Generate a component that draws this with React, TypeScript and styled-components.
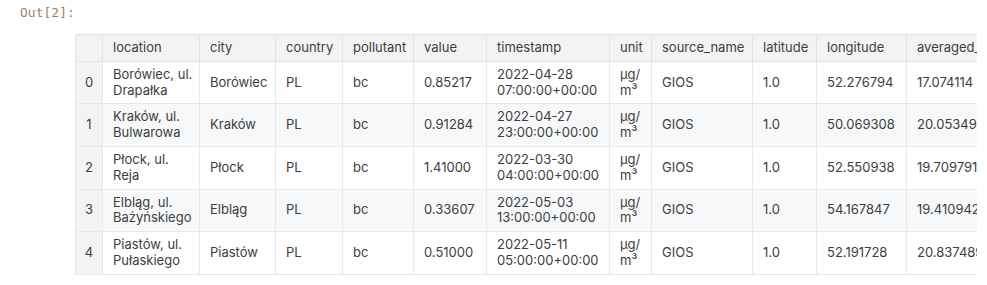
import React from 'react';
import styled, { createGlobalStyle } from 'styled-components';

const GlobalStyle = createGlobalStyle`
  html, body {
    margin: 0;
    padding: 0;
    background: #ffffff;
  }
`;

type Row = {
  location: [string, string];
  city: string;
  value: string;
  timestamp: [string, string];
  lat: string;
  lon: string;
  avg: string;
};

const rows: Row[] = [
  { location: ['Borówiec, ul.', 'Drapałka'], city: 'Borówiec', value: '0.85217', timestamp: ['2022-04-28', '07:00:00+00:00'], lat: '52.276794', lon: '17.074114', avg: '1' },
  { location: ['Kraków, ul.', 'Bulwarowa'], city: 'Kraków', value: '0.91284', timestamp: ['2022-04-27', '23:00:00+00:00'], lat: '50.069308', lon: '20.053492', avg: '1' },
  { location: ['Płock, ul.', 'Reja'], city: 'Płock', value: '1.41000', timestamp: ['2022-03-30', '04:00:00+00:00'], lat: '52.550938', lon: '19.709791', avg: '1' },
  { location: ['Elbląg, ul.', 'Bażyńskiego'], city: 'Elbląg', value: '0.33607', timestamp: ['2022-05-03', '13:00:00+00:00'], lat: '54.167847', lon: '19.410942', avg: '1' },
  { location: ['Piastów, ul.', 'Pułaskiego'], city: 'Piastów', value: '0.51000', timestamp: ['2022-05-11', '05:00:00+00:00'], lat: '52.191728', lon: '20.837489', avg: '1' },
];

// column widths measured from the border lines
const columns = [
  { name: '', width: 27 },
  { name: 'location', width: 97 },
  { name: 'city', width: 76 },
  { name: 'country', width: 67 },
  { name: 'pollutant', width: 71 },
  { name: 'value', width: 73 },
  { name: 'timestamp', width: 123 },
  { name: 'unit', width: 42 },
  { name: 'source_name', width: 101 },
  { name: 'latitude', width: 64 },
  { name: 'longitude', width: 90 },
  { name: 'averaged_over_in_hours', width: 180 },
];

const tableWidth = columns.reduce((s, c) => s + c.width, 0);

const Cell = styled.div`
  padding: 5px 0 0 20px;
`;

const Prompt = styled.div`
  font-family: 'DejaVu Sans Mono', 'Liberation Mono', monospace;
  font-size: 13px;
  line-height: 16px;
  color: #a27d5f;
  height: 29px;
`;

const Output = styled.div`
  margin-left: 55px;
  width: 902px;
  overflow: hidden;
`;

const Table = styled.table<{ $width: number }>`
  width: ${(p) => p.$width}px;
  border-collapse: collapse;
  table-layout: fixed;
  font-family: Inter, 'Noto Sans', sans-serif;
  font-size: 13px;
  line-height: 15.8px;
  color: #3d3d3d;
  white-space: nowrap;
`;

const Th = styled.th`
  background: #f3f3f3;
  border: 1px solid #e4e4e4;
  padding: 5px 10px;
  font-weight: 400;
  text-align: left;
  overflow: hidden;
`;

const Tr = styled.tr<{ $striped: boolean }>`
  background: ${(p) => (p.$striped ? '#f7f8fa' : '#ffffff')};
`;

const Td = styled.td`
  border: 1px solid #e8e8e8;
  padding: 5px 10px;
  text-align: left;
  vertical-align: middle;
  overflow: hidden;
`;

const IndexTd = styled(Td)`
  background: #f3f3f3;
  text-align: center;
  padding: 5px 0;
`;

export default function App() {
  return (
    <>
      <GlobalStyle />
      <Cell>
        <Prompt>Out[2]:</Prompt>
        <Output>
          <Table $width={tableWidth}>
            <colgroup>
              {columns.map((c, i) => (
                <col key={i} style={{ width: c.width }} />
              ))}
            </colgroup>
            <thead>
              <tr>
                {columns.map((c, i) => (
                  <Th key={i}>{c.name}</Th>
                ))}
              </tr>
            </thead>
            <tbody>
              {rows.map((r, i) => (
                <Tr key={i} $striped={i % 2 === 1}>
                  <IndexTd>{i}</IndexTd>
                  <Td>
                    {r.location[0]}
                    <br />
                    {r.location[1]}
                  </Td>
                  <Td>{r.city}</Td>
                  <Td>PL</Td>
                  <Td>bc</Td>
                  <Td>{r.value}</Td>
                  <Td>
                    {r.timestamp[0]}
                    <br />
                    {r.timestamp[1]}
                  </Td>
                  <Td>
                    µg/
                    <br />
                    m³
                  </Td>
                  <Td>GIOS</Td>
                  <Td>1.0</Td>
                  <Td>{r.lat}</Td>
                  <Td>{r.lon}</Td>
                  <Td>{r.avg}</Td>
                </Tr>
              ))}
            </tbody>
          </Table>
        </Output>
      </Cell>
    </>
  );
}
